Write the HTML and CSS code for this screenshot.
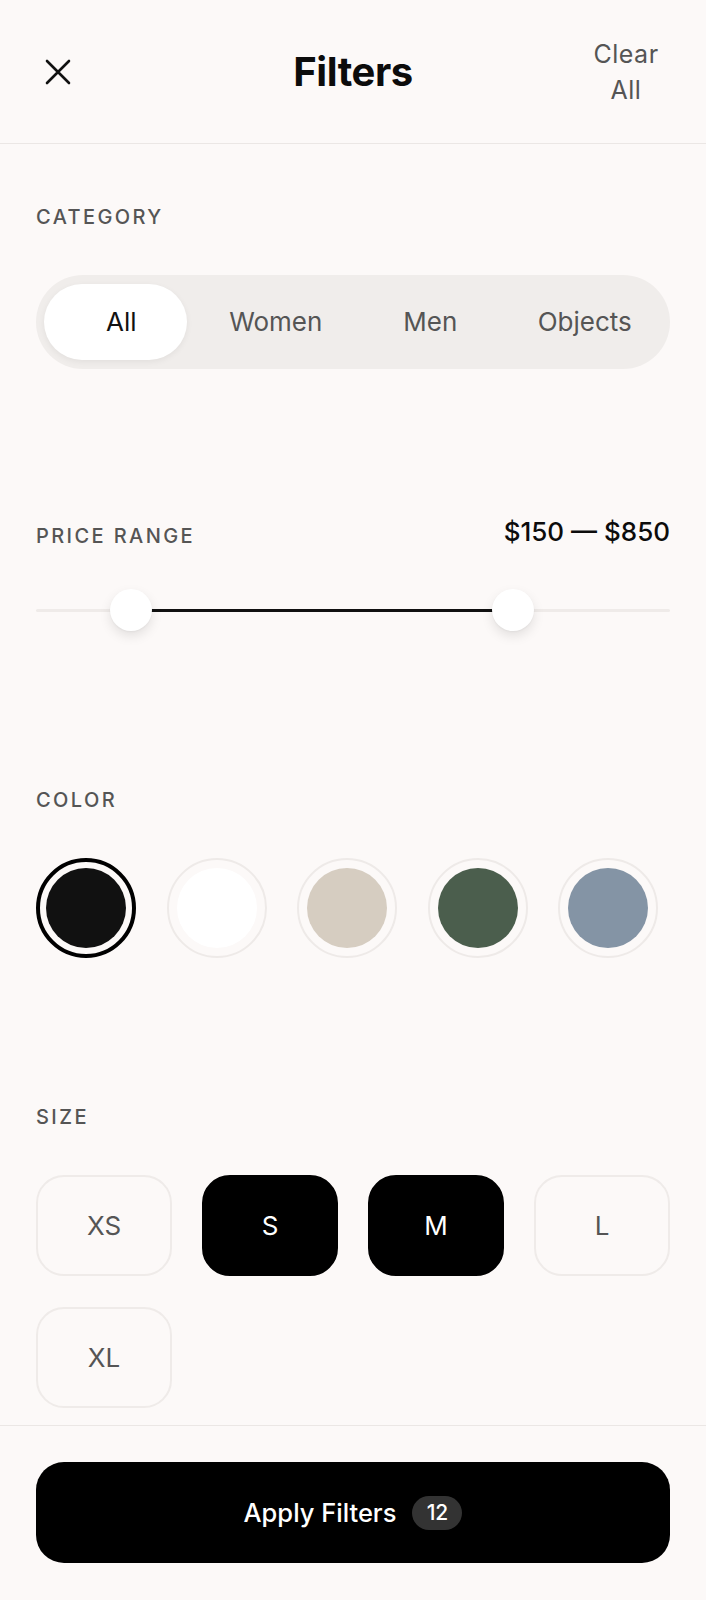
FILE: index.html
```html
<!DOCTYPE html>
<html lang="en">
<head>
<meta charset="utf-8">
<title>Filters</title>
<link rel="stylesheet" href="styles.css">
</head>
<body>
<div class="app">
  <header class="header">
    <button class="close-btn" aria-label="Close">
      <svg width="26" height="26" viewBox="0 0 26 26" fill="none" stroke="#111" stroke-width="2.6" stroke-linecap="round">
        <path d="M2 2L24 24M24 2L2 24"/>
      </svg>
    </button>
    <h1 class="title">Filters</h1>
    <button class="clear-btn">Clear All</button>
  </header>

  <main class="content">
    <section class="section">
      <h2 class="label">CATEGORY</h2>
      <div class="segmented">
        <button class="seg active">All</button>
        <button class="seg">Women</button>
        <button class="seg">Men</button>
        <button class="seg">Objects</button>
      </div>
    </section>

    <section class="section">
      <div class="price-row">
        <h2 class="label">PRICE RANGE</h2>
        <span class="price-value">$150 — $850</span>
      </div>
      <div class="slider">
        <div class="track"></div>
        <div class="fill" style="left: 15%; right: 24.8%;"></div>
        <div class="thumb" style="left: 15%;"></div>
        <div class="thumb" style="left: 75.2%;"></div>
      </div>
    </section>

    <section class="section">
      <h2 class="label">COLOR</h2>
      <div class="swatches">
        <button class="swatch selected"><span class="dot dot-black"></span></button>
        <button class="swatch"><span class="dot dot-white"></span></button>
        <button class="swatch"><span class="dot dot-beige"></span></button>
        <button class="swatch"><span class="dot dot-green"></span></button>
        <button class="swatch"><span class="dot dot-slate"></span></button>
      </div>
    </section>

    <section class="section">
      <h2 class="label">SIZE</h2>
      <div class="sizes">
        <button class="size">XS</button>
        <button class="size on">S</button>
        <button class="size on">M</button>
        <button class="size">L</button>
        <button class="size">XL</button>
      </div>
    </section>
  </main>

  <footer class="footer">
    <button class="apply">Apply Filters <span class="badge">12</span></button>
  </footer>
</div>
</body>
</html>
```

FILE: styles.css
```css
* { box-sizing: border-box; }

html, body {
  margin: 0;
  padding: 0;
}

body {
  background: #fcf9f8;
  font-family: Inter, "Noto Sans", "Liberation Sans", sans-serif;
  color: #111;
}

button {
  font-family: inherit;
  border: none;
  background: none;
  padding: 0;
  margin: 0;
  cursor: pointer;
}

.app {
  height: 100vh;
  display: flex;
  flex-direction: column;
}

/* Header */
.header {
  height: 144px;
  flex: 0 0 auto;
  display: grid;
  grid-template-columns: 1fr auto 1fr;
  align-items: center;
  padding: 0 36px;
  border-bottom: 1px solid #ebe7e5;
}

.close-btn {
  width: 44px;
  height: 44px;
  display: flex;
  align-items: center;
  justify-content: center;
  justify-self: start;
}

.close-btn svg { display: block; }

.title {
  margin: 0;
  font-size: 40px;
  font-weight: 700;
  line-height: 48px;
  letter-spacing: -0.01em;
  color: #0c0c0c;
}

.clear-btn {
  justify-self: end;
  width: 88px;
  padding-top: 1px;
  font-size: 25px;
  line-height: 36px;
  color: #555;
  text-align: center;
  letter-spacing: 0.02em;
}

/* Content */
.content {
  flex: 1 1 auto;
  overflow: hidden;
  padding: 61px 36px 0;
  display: flex;
  flex-direction: column;
  gap: 147px;
}

.label {
  margin: 0;
  font-size: 20px;
  line-height: 24px;
  font-weight: 500;
  letter-spacing: 0.12em;
  color: #555;
}

.section > .label {
  margin-bottom: 46px;
}

/* Segmented */
.segmented {
  display: flex;
  padding: 9px 8px;
  background: #f0edeb;
  border-radius: 47px;
  height: 94px;
}

.seg {
  position: relative;
  flex: 1 1 0;
  font-size: 26px;
  line-height: 32px;
  color: #555;
  border-radius: 38px;
}

.seg.active {
  color: #111;
  isolation: isolate;
}

.seg.active::before {
  content: "";
  position: absolute;
  top: 0;
  bottom: 0;
  left: 0;
  right: 12px;
  background: #fff;
  border-radius: 38px;
  box-shadow: 0 2px 6px rgba(0, 0, 0, 0.06);
  z-index: -1;
}

/* Price */
.price-row {
  display: flex;
  justify-content: space-between;
  align-items: flex-end;
}

.price-value {
  font-size: 26px;
  line-height: 32px;
  font-weight: 500;
  color: #0c0c0c;
}

.slider {
  position: relative;
  height: 42px;
  margin-top: 41px;
  margin-bottom: 10px;
}

.track {
  position: absolute;
  left: 0;
  right: 0;
  top: 20px;
  height: 3px;
  background: #efebe9;
  border-radius: 2px;
}

.fill {
  position: absolute;
  top: 20px;
  height: 3px;
  background: #111;
}

.thumb {
  position: absolute;
  top: 0;
  width: 42px;
  height: 42px;
  margin-left: -21px;
  border-radius: 50%;
  background: #fff;
  box-shadow: 0 5px 12px rgba(0, 0, 0, 0.10), 0 1px 2px rgba(0, 0, 0, 0.04);
}

/* Colors */
.swatches {
  display: flex;
  gap: 30.5px;
}

.swatch {
  width: 100px;
  height: 100px;
  border-radius: 50%;
  border: 2px solid #eeeae8;
  padding: 8px;
  display: flex;
}

.swatch.selected {
  border: 4px solid #000;
  padding: 6px;
}

.dot {
  flex: 1;
  border-radius: 50%;
}

.dot-black { background: #111; }
.dot-white { background: #fff; }
.dot-beige { background: #d6cdc1; }
.dot-green { background: #4b5e4d; }
.dot-slate { background: #8494a5; }

/* Sizes */
.sizes {
  display: grid;
  grid-template-columns: repeat(4, 1fr);
  gap: 31px 30px;
}

.size {
  height: 101px;
  border: 2px solid #efebe9;
  border-radius: 28px;
  font-size: 26px;
  color: #555;
  background: #fcf9f8;
}

.size.on {
  background: #000;
  border-color: #000;
  color: #fff;
}

/* Footer */
.footer {
  flex: 0 0 auto;
  border-top: 1px solid #ebe7e5;
  padding: 36px 36px 37px;
}

.apply {
  width: 100%;
  height: 101px;
  border-radius: 28px;
  background: #000;
  color: #fff;
  font-size: 25.5px;
  font-weight: 500;
  display: flex;
  align-items: center;
  justify-content: center;
  gap: 16px;
}

.badge {
  display: inline-flex;
  align-items: center;
  justify-content: center;
  width: 50px;
  height: 34px;
  border-radius: 17px;
  background: #333;
  font-size: 21px;
  font-weight: 500;
}
```
